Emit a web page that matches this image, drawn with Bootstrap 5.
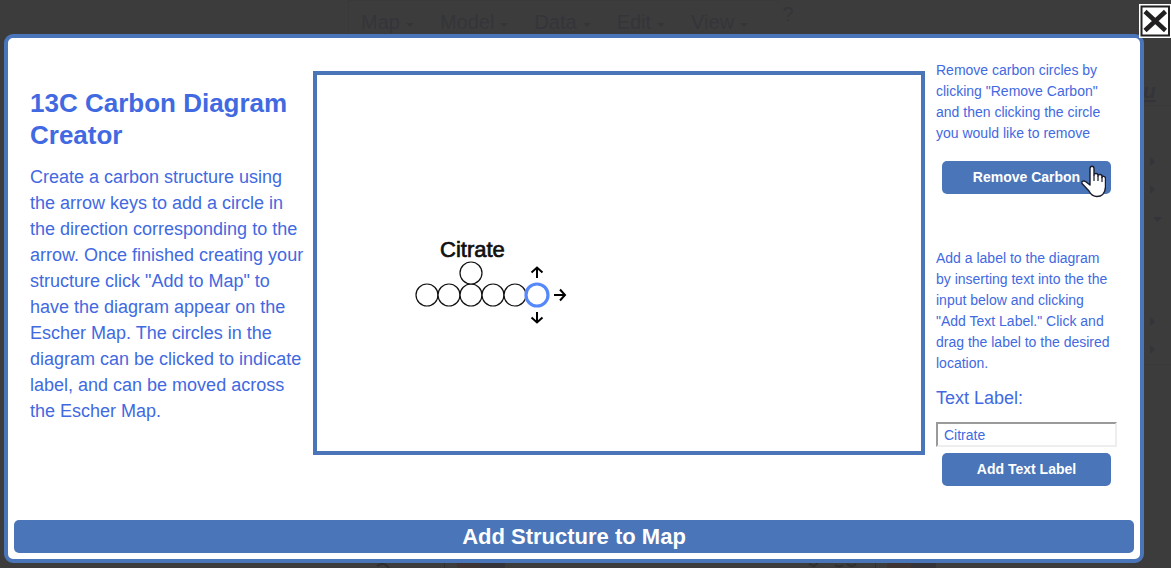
<!DOCTYPE html>
<html lang="en">
<head>
<meta charset="utf-8">
<meta name="viewport" content="width=device-width, initial-scale=1">
<title>13C Carbon Diagram Creator</title>
<link href="https://cdn.jsdelivr.net/npm/bootstrap@5.3.0/dist/css/bootstrap.min.css" rel="stylesheet">
<style>
  :root { --steel: #4a75b9; --royal: #4169e1; --shade: #3c3c3c; --faint: #34353a; }
  body { background: var(--shade); color: var(--royal); font-family: "Liberation Sans", Arial, sans-serif; }
  .map-bar { height: 34px; padding: 0 0 0 348px; color: var(--faint); font-size: 20px; line-height: 24px; }
  .map-bar .menus { gap: 26px; padding: 9px 30px 0 12px; border-left: 1px solid #393939; border-top: 1px solid #393939; }
  .map-bar a { color: inherit; }
  .map-bar .dropdown-toggle::after { font-size: 14px; margin-left: 6px; vertical-align: 2px; }
  .map-bar .help { height: 28px; line-height: 28px; width: 20px; }
  .map-side { top: 80px; right: 0; }
  .map-foot { bottom: 0; left: 0; height: 5px; }
  .creator { margin: 0 27px 5px 4px; padding: 32px 6px 6px; border: 4px solid var(--steel); border-radius: 9px; }
  .workspace { gap: 11px; padding: 0 17px 0 16px; }
  .intro { width: 276px; margin-right: -4px; padding-top: 17px; font-size: 18px; line-height: 26px; }
  .intro h1 { font-size: 26px; line-height: 32px; font-weight: 700; margin-bottom: 13px; }
  .board { border: 4px solid var(--steel); height: 384px; margin-top: 1px; }
  .tools { width: 181px; font-size: 14px; line-height: 21px; margin-top: -10px; }
  .btn-steel, .btn-steel:hover { background: var(--steel); color: #fff; font-weight: 700; border: 0; border-radius: 5px; height: 33px; padding: 0; }
  .tools .btn-steel { font-size: 14px; width: 169px; margin-left: 6px; }
  .remove-box { margin: 17px 0 54px; }
  .submit { font-size: 22px; line-height: 33px; }
  .tools label { font-size: 18px; line-height: 24px; margin: 12px 0; }
  .tools input { height: 25px; font-size: 14px; padding: 0 6px; color: var(--royal); border: 2px solid; border-color: #9a9a9a #eee #eee #9a9a9a; background: #fff; margin-bottom: 6px; }
  .hand { left: 145px; top: 4px; }
  .btn-x { top: 4px; right: 0; width: 32px; height: 34px; z-index: 3; }
</style>
</head>
<body class="position-relative d-flex flex-column min-vh-100 overflow-hidden">
  <header class="map-bar d-flex overflow-hidden">
    <nav class="menus d-flex" aria-label="Map menus">
      <a href="#" class="dropdown-toggle text-decoration-none">Map</a>
      <a href="#" class="dropdown-toggle text-decoration-none">Model</a>
      <a href="#" class="dropdown-toggle text-decoration-none">Data</a>
      <a href="#" class="dropdown-toggle text-decoration-none">Edit</a>
      <a href="#" class="dropdown-toggle text-decoration-none">View</a>
    </nav>
    <a href="#" class="help text-center text-decoration-none">?</a>
  </header>

  <svg class="map-side position-absolute" width="27" height="300" aria-hidden="true">
    <g fill="#34353a">
      <text x="-1" y="18" font-size="21" font-weight="700" font-style="italic" text-decoration="underline">u</text>
      <path d="M6 77l5 4.500-5 4.500zM6 105l5 4.500-5 4.500zM9 137h9l-4.500 5zM6 237l5 4.500-5 4.500zM6 265l5 4.500-5 4.500z"/>
    </g>
    <path d="M0 25.500h27M0 284.500h27" stroke="#393939"/>
  </svg>
  <svg class="map-foot position-absolute w-100" height="5" aria-hidden="true">
    <path d="M377 3q7-5 12 2" fill="none" stroke="#302d2e" stroke-width="2"/>
    <path d="M444.500 0v5M875.500 0v5" stroke="#303030"/>
    <path d="M457 0h23v5h-23zM887 0h24v5h-24z" fill="#3e3434"/>
    <path d="M480 0h25v5h-25zM911 0h25v5h-25z" fill="#333339"/>
    <path d="M809 1l5 2 4-3M835 2q4 3 8 0M847 1q5 4 9 0" fill="none" stroke="#303030" stroke-width="2"/>
  </svg>

  <button type="button" class="btn-x position-absolute border-0 p-0 bg-transparent" aria-label="Close">
    <svg class="d-block" width="32" height="34" viewBox="0 0 32 34">
      <path fill="#fff" d="M0 0h32v34H0z"/>
      <path fill="none" stroke="#222021" stroke-width="2" d="M2.500 2.500h27.500v29H2.500z"/>
      <path fill="none" stroke="#222021" stroke-width="4.500" d="M6 7.500l20.500 19M26.500 7.500l-20.500 19"/>
    </svg>
  </button>

  <main class="creator bg-white d-flex flex-column flex-grow-1 justify-content-between position-relative">
    <div class="workspace d-flex">
      <section class="intro flex-shrink-0">
        <h1>13C Carbon Diagram Creator</h1>
        <p class="mb-0">Create a carbon structure using the arrow keys to add a circle in the direction corresponding to the arrow. Once finished creating your structure click "Add to Map" to have the diagram appear on the Escher Map. The circles in the diagram can be clicked to indicate label, and can be moved across the Escher Map.</p>
      </section>

      <section class="board flex-grow-1 overflow-hidden" aria-label="Carbon diagram">
        <svg class="d-block" width="300" height="376">
          <text x="123" y="182" font-size="22" fill="#111" stroke="#111" stroke-width="0.700">Citrate</text>
          <g fill="#fff" stroke="#111" stroke-width="1.200">
            <circle cx="110" cy="220" r="11"/>
            <circle cx="132" cy="220" r="11"/>
            <circle cx="154" cy="220" r="11"/>
            <circle cx="154" cy="198" r="11"/>
            <circle cx="176" cy="220" r="11"/>
            <circle cx="198" cy="220" r="11"/>
          </g>
          <circle cx="220" cy="220" r="11" fill="#fff" stroke="#5588fa" stroke-width="3.200"/>
          <g fill="none" stroke="#000" stroke-width="2">
            <path d="M220 203v-10M214.500 197.500l5.500-5 5.500 5"/>
            <path d="M220 237v10M214.500 242.500l5.500 5 5.500-5"/>
            <path d="M237 220h11M243 214.500l5 5.500-5 5.500"/>
          </g>
        </svg>
      </section>

      <section class="tools flex-shrink-0">
        <p class="mb-0">Remove carbon circles by clicking "Remove Carbon" and then clicking the circle you would like to remove</p>
        <div class="remove-box position-relative">
          <button type="button" class="btn btn-steel d-block">Remove Carbon</button>
          <svg class="hand position-absolute" width="25" height="33" viewBox="0 0 25 33" aria-hidden="true">
            <path fill="#fff" stroke="#1b1b2b" stroke-width="1.400" stroke-linejoin="round" d="M9 20V3.500C9 .5 13 .5 13 3.500V10c0-2 4-2 4 .5V11c0-2 4-2 4 .5V12.500c0-2 3.500-1.500 3.500 1v8.500c-.5 6-3 9.500-8.500 9.500-4 0-6.500-2.500-8-5.500L1 18.500C0 16 3 15.500 4.500 16.500z"/>
            <path d="M13 10v6M17 11V16M21 12v5" stroke="#1b1b2b" stroke-width="1.200"/>
          </svg>
        </div>
        <p class="mb-0">Add a label to the diagram by inserting text into the the input below and clicking "Add Text Label." Click and drag the label to the desired location.</p>
        <label for="textLabel" class="d-block">Text Label:</label>
        <input id="textLabel" type="text" value="Citrate" class="d-block w-100">
        <button type="button" class="btn btn-steel d-block">Add Text Label</button>
      </section>
    </div>
    <button type="button" class="btn btn-steel submit w-100">Add Structure to Map</button>
  </main>
<script src="https://cdn.jsdelivr.net/npm/bootstrap@5.3.0/dist/js/bootstrap.bundle.min.js"></script>
</body>
</html>
